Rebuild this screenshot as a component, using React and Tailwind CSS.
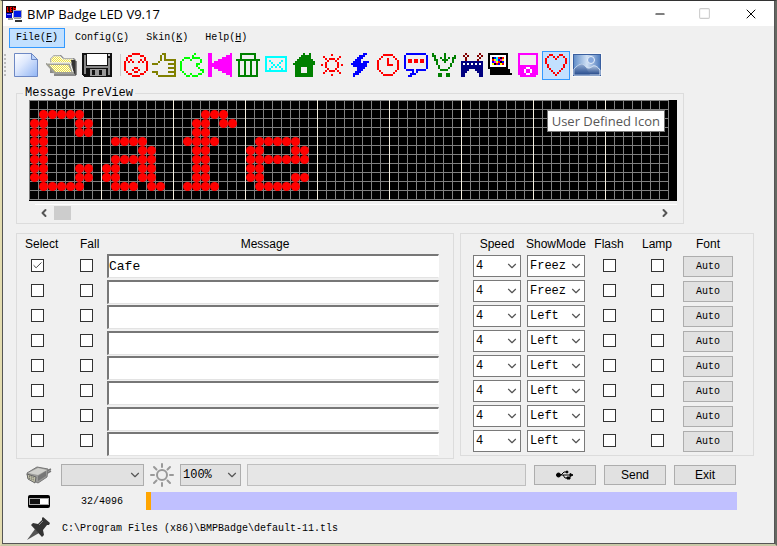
import { useState } from "react";
import { ChevronDown, ChevronLeft, ChevronRight, Minus, Square, X, Check } from "lucide-react";

const COLORS = {
  r: "#ff0000", o: "#808000", l: "#00ff00", m: "#ff00ff", g: "#008000", c: "#00ffff",
  b: "#0000ff", d: "#800000", n: "#000080", k: "#000000", w: "#ffffff", y: "#ffff00",
};

const PIXEL_ICONS = [
  { name: "Face", rows: [
    "....rrrr....", "..rr....rr..", ".r........r.", ".r.r....r.r.", "r.r.r..r.r.r", "r..........r",
    "r..........r", "r....rr....r", "r...r..r...r", ".r...rr...r.", "..rr....rr..", "....rrrr...."] },
  { name: "Thumb", rows: [
    ".....oo.....", "....o.o.....", "....o.o.....", "....o.oooooo", "...o.......o", "ooo.....oooo",
    "...........o", "........oooo", "...........o", "ooo.....oooo", "..o........o", "...ooooooooo"] },
  { name: "Apple", rows: [
    ".......l....", "......l.....", "..lll.llll..", ".l...l....l.", "l.........l.", "l.......ll..",
    "l.......l...", "l........l..", "l.........ll", ".l.........l", "..l..l...ll.", "...ll.lll..."] },
  { name: "Previous", rows: [
    "mm.........m", "mm.......mmm", "mm.....mmmmm", "mm...mmmmmmm", "mm.mmmmmmmmm", "mmmmmmmmmmmm",
    "mmmmmmmmmmmm", "mm.mmmmmmmmm", "mm...mmmmmmm", "mm.....mmmmm", "mm.......mmm", "mm.........m"] },
  { name: "Trash", rows: [
    "..gggggggg..", "..g......g..", "..g......g..", "gggggggggggg", ".g..g..g..g.", ".g..g..g..g.",
    ".g..g..g..g.", ".g..g..g..g.", ".g..g..g..g.", ".g..g..g..g.", ".g..g..g..g.", ".gggggggggg."] },
  { name: "Mail", rows: [
    "ccccccccccc", "c.........c", "c.c.....c.c", "c..c...c..c", "c...c.c...c", "c..c.c.c..c",
    "c.c.....c.c", "ccccccccccc", "..........."] },
  { name: "House", rows: [
    ".....g..g..", "....ggggg..", "...gggggg..", "..gggggggg.", ".gggggggggg", "ggggggggggg",
    ".ggggggggg.", ".ggg...ggg.", ".ggg...ggg.", ".ggg...ggg.", ".ggggggggg.", ".ggggggggg."] },
  { name: "Sun", rows: [
    ".....r.....", ".r.......r.", "..r.rrr.r..", "...r...r...", "..r.....r..", "r.r.....r.r",
    "..r.....r..", "...r...r...", "..r.rrr.r..", ".r.......r.", ".....r....."] },
  { name: "Bolt", rows: [
    "......bb.", "....bbb..", "...bbb...", "..bbb....", ".bbbb.bbb", "bbbbbbbb.",
    ".bbbbbbb.", "...bbbb..", "...bbb...", "..bbb....", ".bbb.....", ".b......."] },
  { name: "Clock", rows: [
    "...rrrrr...", "..r.....r..", ".r...r...r.", "r....r....r", "r....r....r", "r....rrr..r",
    "r.........r", "r.........r", ".r.......r.", "..r.....r..", "...rrrrr..."] },
  { name: "Chat", rows: [
    ".bbbbbbbbbb.", "b..........b", "b..........b", "b.rr.rr.rr.b", "b.rr.rr.rr.b", "b..........b",
    "b..........b", "b..........b", ".bbbb.bbbbb.", "....b.b.....", "...bbb......", "..bb........"] },
  { name: "Basket", rows: [
    "g.....g.....", "gg....g....g", ".g..g.g.g.gg", ".gg..ggg..g.", "..g...g...g.", "..g......g..",
    "...g.....g..", "...g....g...", "....gggg....", "............", "...gg..gg...", "...gg..gg..."] },
  { name: "Castle", rows: [
    "..d......d.", ".d.d....d.d", "..d......d.", "..d.....d..", "nnnnnnnnnnn", "nwnwnwnwnwn",
    "nnnnnnnnnnn", "nnnnnnnnnnn", "nnnn...nnnn", "nnn.....nnn", "nn.......nn", "nn.......nn"] },
  { name: "Computer", rows: [
    "kkkkkkkkkk..", "kwwwwwwwwk..", "kwkbcrkrwk..", "kwrycbmywk..", "kwbmyrkbwk..", "kwykrbyrwk..",
    "kwwwwwwwwk..", "kkkkkkkkkk..", ".kkkkkkkkkk.", ".kkkkkkkkkk.", ".kkkkkkkkkkk", "............"] },
  { name: "Player", rows: [
    "mmmmmmmmmm", "m........m", "m........m", "m........m", "m........m", "m........m",
    "mmmmmmmmmm", "mmmmwwmmmm", "mmmwmmwmmm", "mmmwmmwmmm", "mmmmwwmmmm", ".mmmmmmmm."] },
  { name: "User Defined Icon", active: true, rows: [
    "..rr...rr..", ".r..r.r..r.", "r....r....r", "r.........r", "r.........r", ".r.......r.",
    ".r.......r.", "..r.....r..", "...r...r...", "....r.r....", ".....r....."] },
];

const LED_COLS = 71;
const LED_TEXT = [
  "",
  ".#####.............###",
  "##...##...........##.##",
  "##...##...........##",
  "##.......####....####....#####",
  "##..........##....##....##...##",
  "##.......#####....##....#######",
  "##...##.##..##....##....##",
  "##...##.##..##....##....##...##",
  ".#####...###.##..####....#####",
  "",
];

const ROWS = [
  { text: "Cafe", select: true, mode: "Freez" },
  { text: "", select: false, mode: "Freez" },
  { text: "", select: false, mode: "Left" },
  { text: "", select: false, mode: "Left" },
  { text: "", select: false, mode: "Left" },
  { text: "", select: false, mode: "Left" },
  { text: "", select: false, mode: "Left" },
  { text: "", select: false, mode: "Left" },
];

function PixelIcon({ rows }) {
  const w = rows[0].length;
  return (
    <svg width={w * 2} height={rows.length * 2} viewBox={`0 0 ${w} ${rows.length}`} shapeRendering="crispEdges">
      {rows.map((row, y) =>
        [...row].map((p, x) => p !== "." && <rect key={`${x}-${y}`} x={x} y={y} width="1" height="1" fill={COLORS[p]} />)
      )}
    </svg>
  );
}

function AppLogo() {
  return (
    <svg width="16" height="16" viewBox="0 0 16 16" shapeRendering="crispEdges">
      <rect width="10" height="7" fill="#200" />
      <path d="M1 1v4h2M4 1h2M4 3h2M4 5h2M4 1v4M7 1v4h2V2H7" stroke="#e00" fill="none" />
      <path d="M0 7h6v5H0z" fill="#0000c8" />
      <path d="M1 8h4" stroke="#88f" />
      <path d="M7 4h8v7H7z" fill="#0018e8" stroke="#aab" />
      <path d="M2 12h5v2H2zM8 12h7v1H8z" fill="#999" />
      <path d="M9 14h7v2H9z" fill="#333" />
    </svg>
  );
}

function NewIcon() {
  return (
    <svg width="24" height="24" viewBox="0 0 24 24">
      <defs>
        <linearGradient id="page" x1="0" y1="0" x2="1" y2="1">
          <stop offset="0" stopColor="#ffffff" /><stop offset="0.4" stopColor="#dfe9fd" /><stop offset="1" stopColor="#8fb4f4" />
        </linearGradient>
      </defs>
      <path d="M.5.5h17l6 6v17H.5z" fill="url(#page)" stroke="#6d88c4" />
      <path d="M17.500.5v6h6z" fill="#b9d2fa" stroke="#6d88c4" />
    </svg>
  );
}

function OpenIcon() {
  return (
    <svg width="32" height="22" viewBox="0 0 32 22">
      <defs>
        <pattern id="weave" width="2" height="2" patternUnits="userSpaceOnUse">
          <rect width="2" height="2" fill="#fffde0" /><rect width="1" height="1" fill="#ece04a" /><rect x="1" y="1" width="1" height="1" fill="#ece04a" />
        </pattern>
      </defs>
      <path d="M4 19V5l4-4h7l3 3h10l2 2v14z" fill="#8a8a8a" />
      <path d="M5 9V5l3-3h6l3 3h10v4z" fill="url(#weave)" stroke="#d8d8d0" />
      <path d="M25 6h4v14h-1z" fill="#333" />
      <path d="M1 10h22l4 9H9z" fill="url(#weave)" stroke="#a0a098" strokeWidth="2" />
      <path d="M1 9h23l3 9" fill="none" stroke="#fbfbf4" />
      <path d="M8 21h22V7" fill="none" stroke="#222" />
    </svg>
  );
}

function SaveIcon() {
  return (
    <svg width="30" height="24" viewBox="0 0 30 24" shapeRendering="crispEdges">
      <path d="M0 0h30v24H3l-3-2z" fill="#111" />
      <path d="M2 2h2v19H2zM26 5h2v17h-2zM4 13h22v2H4z" fill="#888" />
      <path d="M5 1h20v11H5z" fill="#fff" />
      <path d="M8 16h16v7H8z" fill="#999" />
      <path d="M10 17h3v5h-3zM17 17h3v5h-3z" fill="#111" />
      <path d="M26 1h2v2h-2z" fill="#ccc" />
    </svg>
  );
}

function PictureIcon() {
  return (
    <svg width="30" height="24" viewBox="0 0 30 24">
      <defs>
        <linearGradient id="sky" x1="0" y1="0" x2="1" y2="0">
          <stop offset="0" stopColor="#5f8cc8" /><stop offset="0.5" stopColor="#cfe0f4" /><stop offset="1" stopColor="#4a78bc" />
        </linearGradient>
        <linearGradient id="hill" x1="0" y1="0" x2="0" y2="1">
          <stop offset="0" stopColor="#c4d8f0" /><stop offset="1" stopColor="#1f4384" />
        </linearGradient>
      </defs>
      <rect width="30" height="24" fill="#f8f8f8" />
      <rect x="1.500" y="1.500" width="27" height="21" fill="url(#sky)" stroke="#3a5f9f" />
      <circle cx="19" cy="7" r="3.500" fill="#86a8dc" stroke="#e8f1fb" />
      <path d="M2 16c5-5 8-6 11-3 4 4 6 1 8 0s5 1 7 4v5H2z" fill="url(#hill)" stroke="#dce9f8" />
      <path d="M2 16c5-5 8-6 11-3l5 9H2z" fill="#2f579c" opacity="0.350" />
    </svg>
  );
}

function LedPanel() {
  return (
    <svg width="647" height="101" viewBox="0 0 647 101">
      <g shapeRendering="crispEdges">
        {Array.from({ length: 12 }, (_, i) => (
          <rect key={i} x="0" y={i * 9} width={LED_COLS * 9 + 1} height="1" fill="#808080" />
        ))}
        {Array.from({ length: LED_COLS + 1 }, (_, i) => (
          <rect key={i} x={i * 9} y="0" width="1" height="100" fill={i && i % 8 === 0 ? "#f5efe0" : "#808080"} />
        ))}
      </g>
      {LED_TEXT.map((row, y) =>
        [...row].map((p, x) => p === "#" && <circle key={`${x}-${y}`} cx={x * 9 + 5.5} cy={y * 9 + 5.5} r="4.500" fill="#ff0000" />)
      )}
    </svg>
  );
}

function PlugIcon() {
  return (
    <svg width="26" height="20" viewBox="0 0 26 20">
      <path d="M17 8l8-4M18 10l7-4" stroke="#777" strokeWidth="1.500" />
      <path d="M1 8l10-6 11 2-1 8-9 6-10-5z" fill="#9a9a98" stroke="#777" />
      <path d="M2 8l10-5 9 2-9 5z" fill="#d0d0cc" />
      <path d="M1 9l9 3-1 6-7-4z" fill="#c0c0a8" stroke="#666" />
      <path d="M3 11l5 2M3 13l5 2" stroke="#555" strokeDasharray="1 1" />
      <path d="M12 11l8-5v5l-8 5z" fill="#777" />
    </svg>
  );
}

function BrightnessIcon() {
  return (
    <svg width="24" height="24" viewBox="0 0 24 24" fill="none" stroke="#999" strokeWidth="2" strokeLinecap="round">
      <circle cx="12" cy="12" r="5" />
      <path d="M12 1v3M12 20v3M1 12h3M20 12h3M4 4l2.500 2.500M17.500 17.500L20 20M4 20l2.500-2.500M17.500 6.500L20 4" />
    </svg>
  );
}

function MemoryIcon() {
  return (
    <svg width="22" height="13" viewBox="0 0 22 13">
      <rect width="22" height="13" rx="2" fill="#000" />
      <rect x="1.500" y="3.500" width="19" height="6" fill="#111" stroke="#aaa" />
      <rect x="12" y="4" width="8" height="5" fill="#fff" />
    </svg>
  );
}

function PinIcon() {
  return (
    <svg width="24" height="24" viewBox="0 0 24 24">
      <path d="M0 24l8-11 4 4z" fill="#555" />
      <path d="M16 1l7 6-1 2-2 0-4 5 1 5-2 2L4 9l2-2 5 1 4-4 0-2z" fill="#333" />
      <path d="M12 9l4-4" stroke="#888" />
    </svg>
  );
}

function UsbIcon() {
  return (
    <svg width="18" height="10" viewBox="0 0 18 10" fill="none" stroke="#000">
      <path d="M2 5h13M5 5l3-3h3M7 5l2 3h3" />
      <circle cx="2.500" cy="5" r="2" fill="#000" />
      <circle cx="11" cy="2" r="1" fill="#000" />
      <path d="M11 7h3v2h-3zM14 3.500L17 5l-3 1.500z" fill="#000" />
    </svg>
  );
}

function CheckBox({ label, defaultChecked = false }) {
  const [on, setOn] = useState(defaultChecked);
  return (
    <label className="relative flex h-[25px] items-center">
      <input type="checkbox" aria-label={label} checked={on} onChange={() => setOn(!on)}
        className="h-[13px] w-[13px] appearance-none border border-[#333] bg-white" />
      {on && <Check className="pointer-events-none absolute left-px h-[11px] w-[11px] text-[#333]" strokeWidth={2} />}
    </label>
  );
}

function Combo({ label, options, value, className }) {
  return (
    <div className={`relative h-[22px] ${className}`}>
      <select aria-label={label} defaultValue={value} className="block h-full w-full appearance-none border border-inherit bg-transparent pl-[2px] font-['Liberation_Mono',monospace] text-xs text-black">
        {options.map((o) => <option key={o}>{o}</option>)}
      </select>
      <ChevronDown className="pointer-events-none absolute right-[2px] top-1 h-[14px] w-[14px] text-[#555]" strokeWidth={2} />
    </div>
  );
}

function Column({ title, className = "items-center", children }) {
  return (
    <div className={`flex flex-col ${className}`}>
      <div className="flex h-[19px] items-center whitespace-nowrap text-xs">{title}</div>
      {children}
    </div>
  );
}

function MenuItem({ label, accel, active }) {
  return (
    <button className={`h-5 border px-[6px] font-['Liberation_Mono',monospace] text-[10px] leading-4 ${active ? "border-[#3399ff] bg-[#c2e0ff]" : "border-transparent"}`}>
      {label}(<u>{accel}</u>)
    </button>
  );
}

export default function App() {
  return (
    <div className="flex min-h-screen flex-col border-t border-r-2 border-b-2 border-l-2 border-t-[#333] border-r-[#646861] border-b-[#c9c9a8] border-l-[#e3dcb0] bg-[#f0f0f0] font-['Liberation_Sans',Arial,sans-serif] text-black">
      <div className="flex flex-1 flex-col border-x border-b border-[#555]">
        <header className="flex h-[25px] items-center bg-white pl-[3px]">
          <AppLogo />
          <h1 className="ml-[5px] flex-1 font-['Open_Sans',sans-serif] text-[13px] leading-5">BMP Badge LED V9.17</h1>
          <button aria-label="Minimize" className="flex w-[45px] justify-center"><Minus className="h-[14px] w-[14px]" strokeWidth={2} /></button>
          <button aria-label="Maximize" disabled className="flex w-[45px] justify-center text-[#ccc]"><Square className="h-[13px] w-[13px]" strokeWidth={2} /></button>
          <button aria-label="Close" className="flex w-[47px] justify-center"><X className="h-4 w-4" strokeWidth={1.5} /></button>
        </header>

        <nav className="flex items-center gap-[3px] pt-[2px] pl-[6px]">
          <MenuItem label="File" accel="F" active />
          <MenuItem label="Config" accel="C" />
          <MenuItem label="Skin" accel="K" />
          <MenuItem label="Help" accel="H" />
        </nav>

        <div className="flex h-[34px] items-center pl-px" role="toolbar">
          <div className="h-[22px] border-l-2 border-dotted border-[#bbb]"></div>
          <button aria-label="New" className="ml-2"><NewIcon /></button>
          <button aria-label="Open" className="ml-2"><OpenIcon /></button>
          <button aria-label="Save" className="ml-1"><SaveIcon /></button>
          <div className="ml-2 mr-px h-[22px] border-l border-[#ccc]"></div>
          {PIXEL_ICONS.map((icon) => (
            <button key={icon.name} aria-label={icon.name}
              className={`flex h-[29px] w-7 items-center justify-center border ${icon.active ? "border-[#3399ff] bg-[#c2e0ff]" : "border-transparent"}`}>
              <PixelIcon rows={icon.rows} />
            </button>
          ))}
          <button aria-label="Picture" className="ml-[2px]"><PictureIcon /></button>
        </div>

        <main className="flex flex-1 flex-col pl-[13px]">
          <fieldset className="mt-1 mr-[90px] border border-[#dcdcdc] px-[6px] pb-[3px]">
            <legend className="px-[2px] font-['Liberation_Mono',monospace] text-xs leading-[14px]">Message PreView</legend>
            <div className="relative ml-[6px] bg-black">
              <LedPanel />
              <div role="tooltip" className="absolute top-[10px] right-3 border border-[#767676] bg-white px-1 font-['Open_Sans',sans-serif] text-[13px] leading-5 text-[#575757]">User Defined Icon</div>
            </div>
            <div className="mt-[3px] ml-3 flex h-4 items-center border-t border-white pt-px text-[#555]">
              <button aria-label="Scroll left" className="ml-[3px]"><ChevronLeft className="h-3 w-3" strokeWidth={4} /></button>
              <div className="ml-1 h-[14px] w-[17px] bg-[#cdcdcd]"></div>
              <button aria-label="Scroll right" className="mr-[6px] ml-auto"><ChevronRight className="h-3 w-3" strokeWidth={4} /></button>
            </div>
          </fieldset>

          <div className="mt-[9px] mr-5 flex items-start gap-[6px]">
            <section className="flex flex-1 border border-[#dcdcdc] pr-[14px] pl-2">
              <Column title="Select" className="w-[55px] items-start">
                <div className="pl-[6px]">
                  {ROWS.map((r, i) => <CheckBox key={i} label={`Select ${i + 1}`} defaultChecked={r.select} />)}
                </div>
              </Column>
              <Column title="Fall" className="w-[27px] items-start">
                {ROWS.map((r, i) => <CheckBox key={i} label={`Fall ${i + 1}`} />)}
              </Column>
              <div className="flex h-[224px] flex-1 flex-col justify-between pb-[2px]">
                <div className="flex h-[19px] items-center justify-center pr-4 text-xs">Message</div>
                {ROWS.map((r, i) => (
                  <input key={i} type="text" aria-label={`Message ${i + 1}`} defaultValue={r.text}
                    className="h-6 w-full border-t-2 border-r border-b border-l-2 border-t-[#777] border-r-white border-b-[#e3e3e3] border-l-[#777] bg-white font-['Liberation_Mono',monospace] text-[13px]" />
                ))}
              </div>
            </section>

            <section className="flex border border-[#dcdcdc] pr-5 pb-[2px] pl-3">
              <Column title="Speed" className="w-12 items-center">
                {ROWS.map((r, i) => (
                  <Combo key={i} label={`Speed ${i + 1}`} value="4" options={["1", "2", "3", "4", "5", "6", "7", "8"]} className="mt-[2px] mb-px w-full border-[#7a7a7a] bg-white" />
                ))}
              </Column>
              <Column title="ShowMode" className="ml-[6px] w-[58px] items-center">
                {ROWS.map((r, i) => (
                  <Combo key={i} label={`ShowMode ${i + 1}`} value={r.mode} options={["Freez", "Left", "Right", "Up", "Down"]} className="mt-[2px] mb-px w-full border-[#7a7a7a] bg-white" />
                ))}
              </Column>
              <Column title="Flash" className="ml-[6px] w-9 items-center">
                {ROWS.map((r, i) => <CheckBox key={i} label={`Flash ${i + 1}`} />)}
              </Column>
              <Column title="Lamp" className="ml-3 w-9 items-center">
                {ROWS.map((r, i) => <CheckBox key={i} label={`Lamp ${i + 1}`} />)}
              </Column>
              <Column title="Font" className="ml-2 w-[50px] items-center">
                {ROWS.map((r, i) => (
                  <button key={i} className="mt-[3px] mb-px h-[21px] w-full border border-[#adadad] bg-[#e1e1e1] font-['Liberation_Mono',monospace] text-[10px]">Auto</button>
                ))}
              </Column>
            </section>
          </div>

          <div className="mt-1 mr-[38px] flex items-center pl-[10px]">
            <PlugIcon />
            <Combo label="Port" value="" options={["", "COM1", "COM2"]} className="ml-[9px] w-[83px] border-[#adadad] bg-[#e1e1e1]" />
            <div className="mr-[6px] ml-[6px]"><BrightnessIcon /></div>
            <Combo label="Brightness" value="100%" options={["25%", "50%", "75%", "100%"]} className="w-[61px] border-[#adadad] bg-[#e1e1e1]" />
            <input type="text" aria-label="Status" disabled className="ml-[6px] h-[22px] min-w-0 flex-1 border border-[#bfbfbf] bg-[#e6e6e6]" />
            <button aria-label="USB" className="ml-2 flex h-[20px] w-[62px] items-center justify-center border border-[#adadad] bg-[#e1e1e1]"><UsbIcon /></button>
            <button className="ml-2 h-[20px] w-[62px] border border-[#adadad] bg-[#e1e1e1] text-xs">Send</button>
            <button className="ml-2 h-[20px] w-[62px] border border-[#adadad] bg-[#e1e1e1] text-xs">Exit</button>
          </div>

          <div className="mt-[5px] mr-[37px] flex items-center pl-3">
            <MemoryIcon />
            <div className="ml-[31px] w-[65px] font-['Liberation_Mono',monospace] text-[10px]">32/4096</div>
            <div className="h-[18px] flex-1 bg-[#c0c0ff]">
              <div className="h-full w-[5px] bg-[#ffa500]"></div>
            </div>
          </div>

          <div className="mt-[6px] flex items-center pl-[11px]">
            <PinIcon />
            <div className="ml-[11px] font-['Liberation_Mono',monospace] text-[10px]">C:\Program Files (x86)\BMPBadge\default-11.tls</div>
          </div>
        </main>
      </div>
    </div>
  );
}
